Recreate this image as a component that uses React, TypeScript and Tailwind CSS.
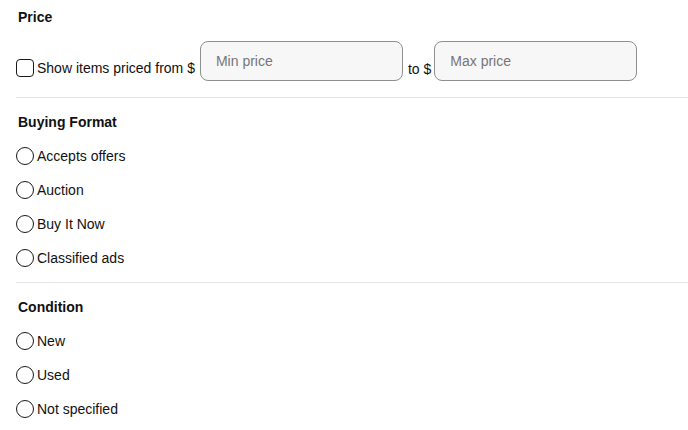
import React from 'react';

const FORMATS = ['Accepts offers', 'Auction', 'Buy It Now', 'Classified ads'];
const CONDITIONS = ['New', 'Used', 'Not specified'];

function Radio({ label, name }: { label: string; name: string }) {
  return (
    <label className="flex h-[34px] items-center gap-[3px]">
      <input
        type="radio"
        name={name}
        className="m-0 h-[18px] w-[18px] appearance-none rounded-full border border-[#191919] bg-white"
      />
      <span>{label}</span>
    </label>
  );
}

export default function App() {
  return (
    <div
      className="min-h-[430px] w-[688px] bg-white pl-4 text-[14px] leading-5 text-[#111]"
      style={{ fontFamily: '"Liberation Sans", Arial, sans-serif' }}
    >
      {/* Price */}
      <div className="pt-[7px] pb-[16px]">
        <div className="h-5 pl-[2px] font-bold">Price</div>
        <div className="mt-[14px] flex items-end">
          <label className="mb-[3px] flex items-center gap-[3px]">
            <input
              type="checkbox"
              className="m-0 h-[18px] w-[18px] appearance-none rounded-[4px] border border-[#191919] bg-white"
            />
            <span>Show items priced from $</span>
          </label>
          <input
            className="ml-[5px] h-[40px] w-[203px] rounded-lg border border-[#8f8f8f] bg-[#f7f7f7] px-[15px] outline-none placeholder:text-[#767676]"
            placeholder="Min price"
          />
          <span className="mr-[3px] mb-[2px] ml-[5px]">to $</span>
          <input
            className="h-[40px] w-[203px] rounded-lg border border-[#8f8f8f] bg-[#f7f7f7] px-[15px] outline-none placeholder:text-[#767676]"
            placeholder="Max price"
          />
        </div>
      </div>

      {/* Buying Format */}
      <div className="border-t border-[#e5e5e5] pt-[14px] pb-[7px]">
        <div className="h-5 pl-[2px] font-bold">Buying Format</div>
        <div className="mt-[7px] flex flex-col">
          {FORMATS.map(f => (
            <Radio key={f} label={f} name="format" />
          ))}
        </div>
      </div>

      {/* Condition */}
      <div className="border-t border-[#e5e5e5] pt-[14px] pb-[7px]">
        <div className="h-5 pl-[2px] font-bold">Condition</div>
        <div className="mt-[7px] flex flex-col">
          {CONDITIONS.map(c => (
            <Radio key={c} label={c} name="condition" />
          ))}
        </div>
      </div>
    </div>
  );
}
